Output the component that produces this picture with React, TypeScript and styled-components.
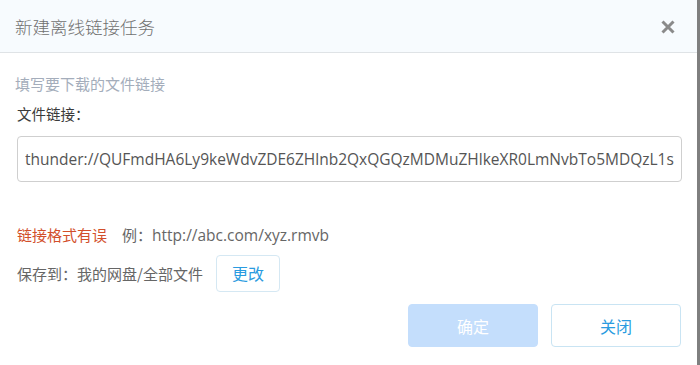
import React from "react";
import styled, { createGlobalStyle } from "styled-components";

const GlobalStyle = createGlobalStyle`
  html, body {
    margin: 0;
    padding: 0;
    background: #7f7f7f;
  }
  body {
    font-family: "Open Sans", "Noto Sans CJK SC", sans-serif;
  }
`;

const Backdrop = styled.div`
  width: 700px;
  height: 365px;
  background: #7f7f7f;
  overflow: hidden;
`;

const Dialog = styled.div`
  width: 697px;
  height: 365px;
  background: #fff;
  display: flex;
  flex-direction: column;
`;

const Header = styled.div`
  height: 53px;
  box-sizing: border-box;
  background: #f7fbfe;
  border-bottom: 1px solid #dfe3e6;
  display: flex;
  align-items: center;
  justify-content: space-between;
  padding: 0 20px 0 15px;
`;

const Title = styled.h1`
  margin: 0;
  font-size: 17.5px;
  font-weight: 300;
  color: #707070;
  font-family: "Noto Sans CJK SC", sans-serif;
`;

const Close = styled.button`
  border: 0;
  background: none;
  padding: 0;
  width: 18px;
  height: 18px;
  cursor: pointer;
  display: flex;
  align-items: center;
  justify-content: center;
  margin-top: 2px;
`;

const Body = styled.div`
  padding: 21px 15px 0 15px;
  display: flex;
  flex-direction: column;
`;

const Hint = styled.div`
  font-size: 15px;
  color: #a4adbb;
  font-family: "Noto Sans CJK SC", sans-serif;
  line-height: 20px;
`;

const Label = styled.div`
  font-size: 14.5px;
  color: #3a3a3a;
  font-family: "Noto Sans CJK SC", sans-serif;
  line-height: 20px;
  margin: 10px 0 0 2px;
`;

const LinkInput = styled.input`
  margin: 12px 0 0 2px;
  width: 665px;
  height: 46px;
  box-sizing: border-box;
  border: 1px solid #cfcfcf;
  border-radius: 4px;
  padding: 0 7px;
  font-size: 15.5px;
  color: #555;
  font-family: "Open Sans", sans-serif;
  outline: none;
`;

const ErrorRow = styled.div`
  margin: 43px 0 0 2px;
  display: flex;
  align-items: center;
  gap: 15px;
  line-height: 20px;
`;

const ErrorText = styled.span`
  color: #d24f2b;
  font-size: 15px;
  font-family: "Noto Sans CJK SC", sans-serif;
`;

const Example = styled.span`
  color: #666;
  font-size: 15px;
  font-family: "Noto Sans CJK SC", sans-serif;

  & b {
    font-weight: 400;
    font-size: 15.5px;
    font-family: "Open Sans", sans-serif;
  }
`;

const SaveRow = styled.div`
  margin: 9px 0 0 2px;
  display: flex;
  align-items: center;
  gap: 13px;
  height: 38px;
`;

const SaveText = styled.span`
  color: #666;
  font-size: 15px;
  font-family: "Noto Sans CJK SC", sans-serif;
`;

const SmallButton = styled.button`
  width: 64px;
  height: 37px;
  border: 1px solid #d5e8f3;
  border-radius: 4px;
  background: #fff;
  color: #2a9be0;
  font-size: 16px;
  font-family: "Noto Sans CJK SC", sans-serif;
  cursor: pointer;
`;

const Footer = styled.div`
  display: flex;
  justify-content: flex-end;
  gap: 13px;
  padding: 12px 16px 0 0;
`;

const FooterButton = styled.button<{ $primary?: boolean }>`
  width: 130px;
  height: 43px;
  border-radius: 4px;
  border: 1px solid ${(p) => (p.$primary ? "#c4defc" : "#c9e4f3")};
  background: ${(p) => (p.$primary ? "#c4defc" : "#fff")};
  color: ${(p) => (p.$primary ? "#fff" : "#2a9be0")};
  font-size: 16px;
  font-family: "Noto Sans CJK SC", sans-serif;
  cursor: pointer;
`;

export default function App() {
  return (
    <Backdrop>
      <GlobalStyle />
      <Dialog>
        <Header>
          <Title>新建离线链接任务</Title>
          <Close aria-label="关闭">
            <svg width="14" height="14" viewBox="0 0 14 14">
              <path d="M1.5 1.5 L12.5 12.5 M12.5 1.5 L1.5 12.5" stroke="#8a8a8a" strokeWidth="3" />
            </svg>
          </Close>
        </Header>
        <Body>
          <Hint>填写要下载的文件链接</Hint>
          <Label>文件链接：</Label>
          <LinkInput
            readOnly
            value="thunder://QUFmdHA6Ly9keWdvZDE6ZHlnb2QxQGQzMDMuZHlkeXR0LmNvbTo5MDQzL1s5sZZ"
          />
          <ErrorRow>
            <ErrorText>链接格式有误</ErrorText>
            <Example>
              例：<b>http://abc.com/xyz.rmvb</b>
            </Example>
          </ErrorRow>
          <SaveRow>
            <SaveText>保存到：我的网盘/全部文件</SaveText>
            <SmallButton>更改</SmallButton>
          </SaveRow>
        </Body>
        <Footer>
          <FooterButton $primary>确定</FooterButton>
          <FooterButton>关闭</FooterButton>
        </Footer>
      </Dialog>
    </Backdrop>
  );
}
